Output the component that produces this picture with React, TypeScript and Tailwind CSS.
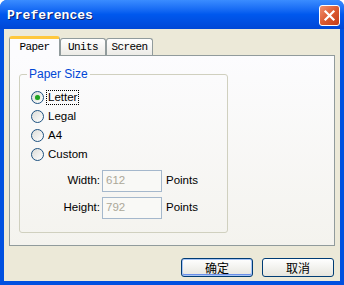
import { useState } from "react";

const radioOptions = ["Letter", "Legal", "A4", "Custom"];
const tabs = ["Paper", "Units", "Screen"];

function Radio({ label, checked, focused }: { label: string; checked: boolean; focused?: boolean }) {
  return (
    <div className="flex h-[19px] items-center">
      <span className="flex h-[13px] w-[13px] items-center justify-center rounded-full border border-[#1C5180] bg-gradient-to-br from-[#DCDCD7] to-[#FFFFFF]">
        {checked && <span className="h-[5px] w-[5px] rounded-full bg-[#21A121] shadow-[0_0_1px_#7BE37B]" />}
      </span>
      <span
        className={
          focused
            ? "ml-[2px] border border-dotted border-black px-[1px] leading-[13px]"
            : "ml-[4px] leading-[13px]"
        }
      >
        {label}
      </span>
    </div>
  );
}

function SizeRow({ label, value }: { label: string; value: string }) {
  return (
    <div className="flex h-[22px] items-center">
      <span className="w-[75px] pr-[2px] text-right">{label}</span>
      <div className="flex h-[22px] w-[60px] items-center border border-[#A5B8CC] bg-[#F9F9F6] px-[3px] text-[#ACA899]">
        {value}
      </div>
      <span className="ml-[4px]">Points</span>
    </div>
  );
}

function XpButton({ label, isDefault }: { label: string; isDefault?: boolean }) {
  return (
    <button
      className={
        "flex h-[19px] w-[72px] items-center justify-center rounded-[3px] border border-[#003C74] bg-gradient-to-b from-[#FFFFFF] to-[#E6E5DE] text-[12px] text-black " +
        (isDefault ? "shadow-[inset_0_0_0_1px_#A8C5F5,inset_0_-1px_0_1px_#6A8FE8]" : "")
      }
      style={{ fontFamily: '"Noto Sans CJK SC", "Liberation Sans", sans-serif' }}
    >
      {label}
    </button>
  );
}

export default function App() {
  const [selected] = useState("Letter");

  return (
    <div
      className="flex h-[285px] w-[344px] flex-col rounded-t-[7px] bg-[#0050E0] text-[11.5px] text-black"
      style={{ fontFamily: '"Liberation Sans", Arial, sans-serif' }}
    >
      {/* title bar */}
      <div className="flex h-[29px] shrink-0 items-center rounded-t-[7px] bg-gradient-to-b from-[#3A8CFF] via-[#0058EE] to-[#0047D6] pl-[7px] pr-[4px] pt-[2px]">
        <span
          className="flex-1 text-[13px] font-bold text-white [text-shadow:1px_1px_0_#0A1E6C]"
          style={{ fontFamily: '"Liberation Mono", monospace' }}
        >
          Preferences
        </span>
        <div className="flex h-[21px] w-[21px] items-center justify-center rounded-[3px] border border-white bg-gradient-to-br from-[#F09070] via-[#DC5A30] to-[#C23C18]">
          <svg width="13" height="13" viewBox="0 0 13 13">
            <path d="M2.5 2.5 L10.5 10.5 M10.5 2.5 L2.5 10.5" stroke="white" strokeWidth="2.2" strokeLinecap="square" />
          </svg>
        </div>
      </div>

      {/* client area */}
      <div className="mx-[4px] mb-[4px] flex flex-1 flex-col bg-[#ECE9D8]">
        <div className="ml-[5px] mt-[6px] flex h-[20px] items-end" style={{ fontFamily: '"Liberation Mono", monospace' }}>
          {tabs.map((tab, i) =>
            i === 0 ? (
              <div
                key={tab}
                className="relative z-10 mb-[-1px] flex h-[20px] w-[51px] items-center justify-center rounded-t-[3px] border-x border-t-[3px] border-x-[#919B9C] border-t-[#FFC83C] bg-[#FCFCFE] pb-[1px] text-[11px] tracking-[-0.6px]"
              >
                {tab}
              </div>
            ) : (
              <div
                key={tab}
                className="flex h-[17px] items-center justify-center rounded-t-[3px] border-x border-t border-[#919B9C] bg-gradient-to-b from-[#FFFFFF] to-[#ECEBE6] text-[11px] tracking-[-0.6px]"
                style={{ width: tab === "Units" ? 46 : 47 }}
              >
                {tab}
              </div>
            ),
          )}
        </div>

        {/* tab panel */}
        <div className="ml-[5px] h-[191px] w-[326px] border border-[#919B9C] bg-gradient-to-b from-[#FCFCFE] to-[#F4F3EE] pl-[9px] pt-[9px]">
          <fieldset className="h-[168px] w-[209px] rounded-[3px] border border-[#D0D0BF] pl-[7px]">
            <legend className="px-[2px] text-[12px] text-[#0046D5]">Paper Size</legend>
            <div className="ml-[4px] mt-[5px] flex flex-col">
              {radioOptions.map((opt) => (
                <Radio key={opt} label={opt} checked={opt === selected} focused={opt === selected} />
              ))}
            </div>
            <div className="mt-[6px] flex flex-col gap-[5px]">
              <SizeRow label="Width:" value="612" />
              <SizeRow label="Height:" value="792" />
            </div>
          </fieldset>
        </div>

        <div className="mr-[6px] mt-[12px] flex justify-end gap-[9px]">
          <XpButton label="确定" isDefault />
          <XpButton label="取消" />
        </div>
      </div>
    </div>
  );
}
